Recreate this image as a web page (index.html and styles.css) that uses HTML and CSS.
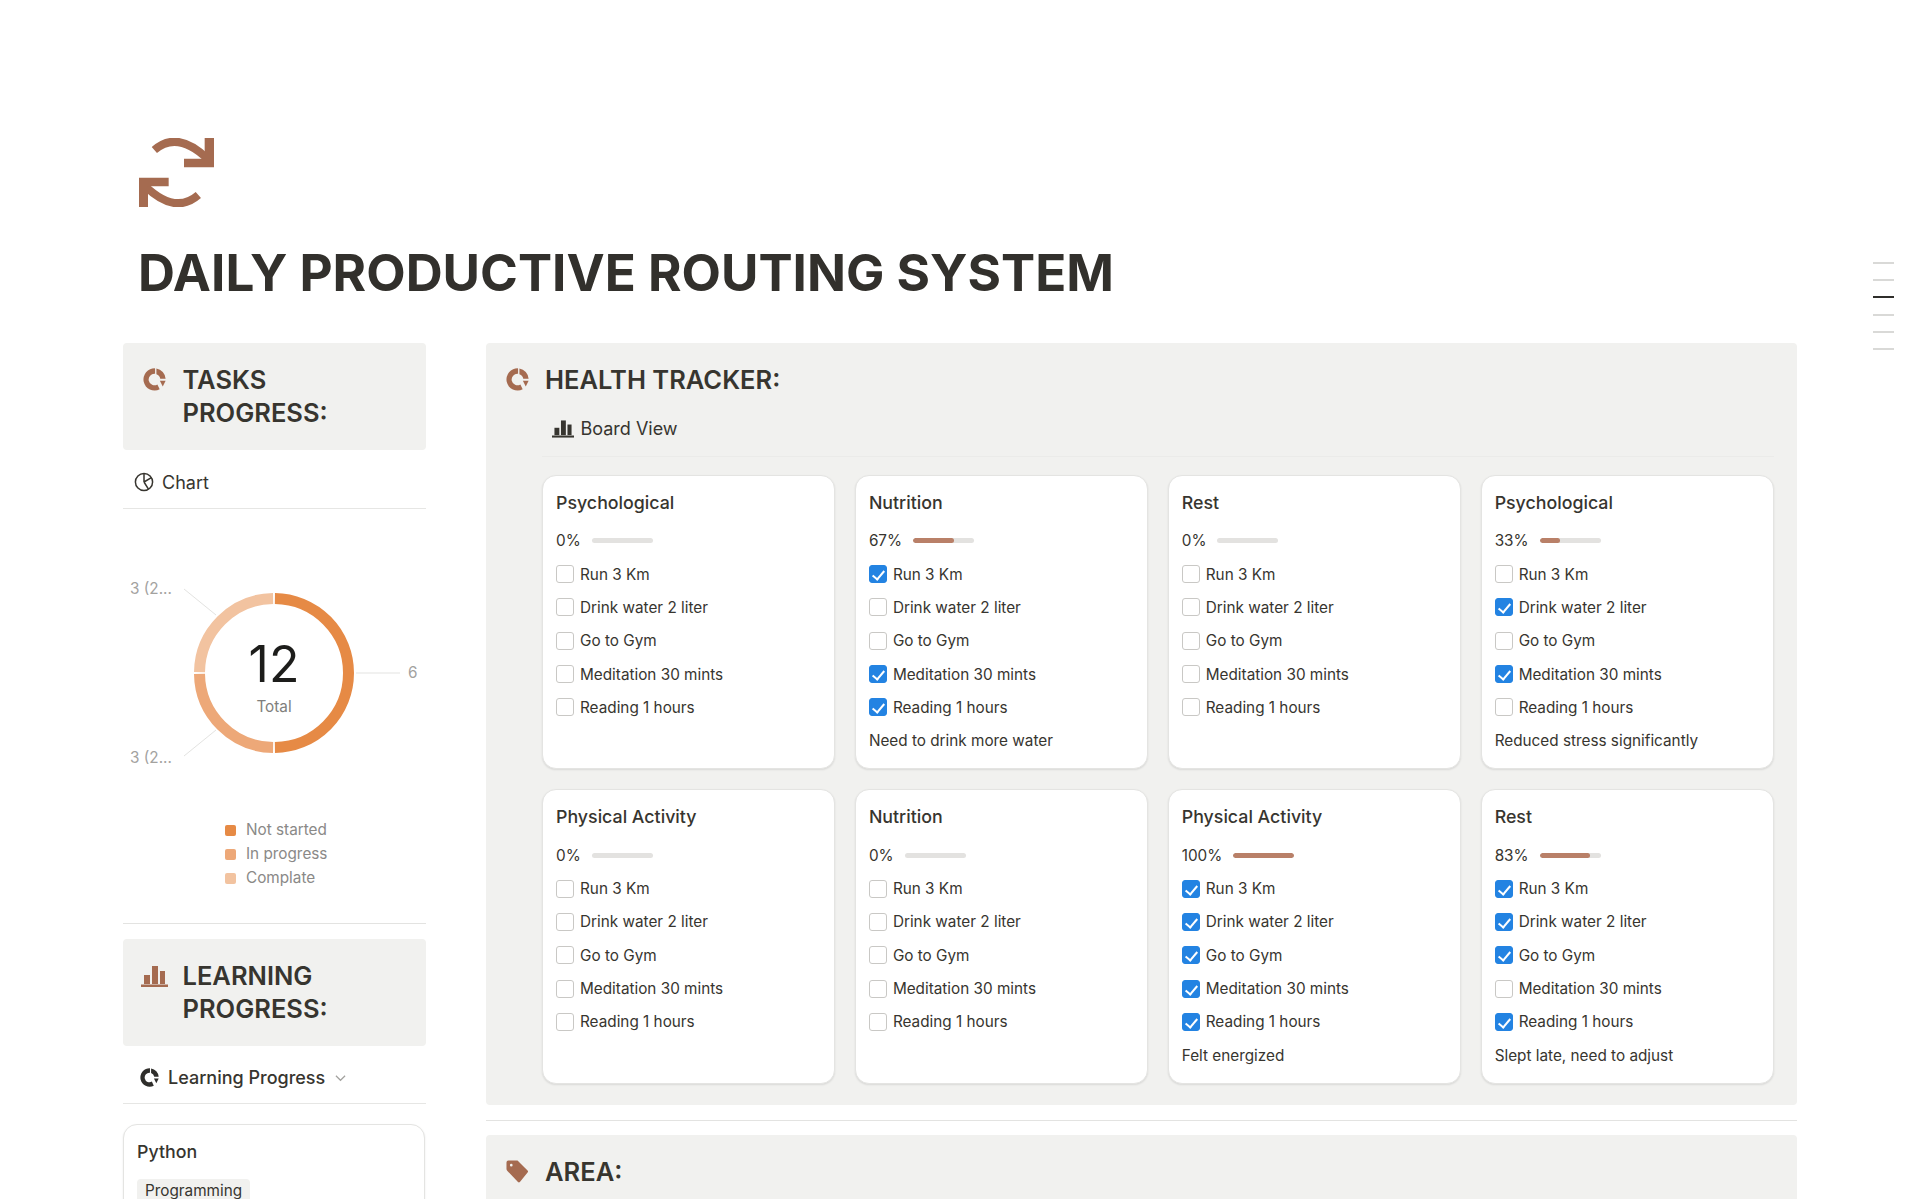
FILE: index.html
```html
<!DOCTYPE html>
<html lang="en">
<head>
    <meta charset="UTF-8">
    <meta name="viewport" content="width=device-width, initial-scale=1.0">
    <title>Daily Productive Routing System</title>
    <link rel="stylesheet" href="styles.css">
</head>
<body>
    <!-- Shared icons -->
    <svg class="sprites" width="0" height="0">
        <symbol id="i-donut" viewBox="0 0 24 24">
            <path d="M12.6 0.4A11.6 11.6 0 1 0 17.4 22.3L15 17.2A6 6 0 1 1 12.6 6.1Z"/>
            <path d="M14 0.6A11.6 11.6 0 0 1 23.6 11.2H18A6 6 0 0 0 14 6.4Z"/>
            <path d="M17.6 13.4H23.6L20.6 19.4Z"/>
        </symbol>
        <symbol id="i-bars" viewBox="0 0 27 21">
            <rect x="3" y="9" width="6" height="9"/>
            <rect x="11" y="0" width="6" height="18"/>
            <rect x="19" y="5" width="5" height="13"/>
            <rect x="0" y="18.5" width="27" height="2.5"/>
        </symbol>
    </svg>

    <div class="page">
        <!-- Page header -->
        <svg class="page-icon" viewBox="0 0 225 207">
            <g id="refresh-half">
                <path d="M46 36Q115 -24 205 62" class="page-icon-arc"/>
                <path d="M197 0H225V88H135V62H197Z"/>
            </g>
            <use href="#refresh-half" transform="rotate(180 112 103.5)"/>
        </svg>
        <h1>DAILY PRODUCTIVE ROUTING SYSTEM</h1>

        <div class="columns">
            <!-- Left column -->
            <aside class="sidebar">
                <div class="callout">
                    <div class="callout-head">
                        <svg class="callout-icon"><use href="#i-donut"/></svg>
                        <h2>TASKS PROGRESS:</h2>
                    </div>
                </div>
                <div class="view-tab">
                    <svg class="tab-chart" viewBox="0 0 20 20">
                        <circle cx="10" cy="10" r="8.6"/>
                        <path d="M10 10V1.4M10 10L17.4 5.6M10 10L14.6 17.3"/>
                    </svg>
                    <span>Chart</span>
                </div>

                <svg class="donut" viewBox="0 0 303 250">
                    <path class="lead" d="M61 41L93 67M61 208L93 182M233 125H277"/>
                    <circle class="seg seg-a" cx="151" cy="125" r="74.5" pathLength="100" stroke-dasharray="49.6 50.4" stroke-dashoffset="-0.2"/>
                    <circle class="seg seg-b" cx="151" cy="125" r="74.5" pathLength="100" stroke-dasharray="24.6 75.4" stroke-dashoffset="-50.2"/>
                    <circle class="seg seg-c" cx="151" cy="125" r="74.5" pathLength="100" stroke-dasharray="24.6 75.4" stroke-dashoffset="-75.2"/>
                    <text class="lbl" x="7" y="46">3 (2...</text>
                    <text class="lbl" x="7" y="215">3 (2...</text>
                    <text class="lbl" x="285" y="130">6</text>
                    <text class="num" x="151" y="134" text-anchor="middle">12</text>
                    <text class="tot" x="151" y="164" text-anchor="middle">Total</text>
                </svg>

                <ul class="legend">
                    <li><i class="seg-a-bg"></i>Not started</li>
                    <li><i class="seg-b-bg"></i>In progress</li>
                    <li><i class="seg-c-bg"></i>Complate</li>
                </ul>

                <hr class="rule side-rule">

                <div class="callout">
                    <div class="callout-head">
                        <svg class="callout-icon icon-bars"><use href="#i-bars"/></svg>
                        <h2>LEARNING PROGRESS:</h2>
                    </div>
                </div>
                <div class="view-tab tab-learning">
                    <svg class="tab-donut"><use href="#i-donut"/></svg>
                    <span>Learning Progress</span>
                    <svg class="chevron" viewBox="0 0 12 8"><path d="M1 1.5L6 6.5L11 1.5"/></svg>
                </div>

                <div class="card card-python">
                    <div class="card-title">Python</div>
                    <span class="tag">Programming</span>
                </div>
            </aside>

            <!-- Right column -->
            <main class="main">
                <section class="callout">
                    <div class="callout-head">
                        <svg class="callout-icon"><use href="#i-donut"/></svg>
                        <h2>HEALTH TRACKER:</h2>
                    </div>
                    <div class="board-wrap">
                        <div class="board-tab">
                            <svg class="tab-bars"><use href="#i-bars"/></svg>
                            <span>Board View</span>
                        </div>
                        <div class="board">
                            <div class="card">
                                <div class="card-title">Psychological</div>
                                <div class="progress"><span class="pct">0%</span><span class="bar"></span></div>
                                <div class="check"><span class="box"></span>Run 3 Km</div>
                                <div class="check"><span class="box"></span>Drink water 2 liter</div>
                                <div class="check"><span class="box"></span>Go to Gym</div>
                                <div class="check"><span class="box"></span>Meditation 30 mints</div>
                                <div class="check"><span class="box"></span>Reading 1 hours</div>
                            </div>
                            <div class="card">
                                <div class="card-title">Nutrition</div>
                                <div class="progress"><span class="pct">67%</span><span class="bar"><b style="width: 67%"></b></span></div>
                                <div class="check"><span class="box on"></span>Run 3 Km</div>
                                <div class="check"><span class="box"></span>Drink water 2 liter</div>
                                <div class="check"><span class="box"></span>Go to Gym</div>
                                <div class="check"><span class="box on"></span>Meditation 30 mints</div>
                                <div class="check"><span class="box on"></span>Reading 1 hours</div>
                                <div class="note">Need to drink more water</div>
                            </div>
                            <div class="card">
                                <div class="card-title">Rest</div>
                                <div class="progress"><span class="pct">0%</span><span class="bar"></span></div>
                                <div class="check"><span class="box"></span>Run 3 Km</div>
                                <div class="check"><span class="box"></span>Drink water 2 liter</div>
                                <div class="check"><span class="box"></span>Go to Gym</div>
                                <div class="check"><span class="box"></span>Meditation 30 mints</div>
                                <div class="check"><span class="box"></span>Reading 1 hours</div>
                            </div>
                            <div class="card">
                                <div class="card-title">Psychological</div>
                                <div class="progress"><span class="pct">33%</span><span class="bar"><b style="width: 33%"></b></span></div>
                                <div class="check"><span class="box"></span>Run 3 Km</div>
                                <div class="check"><span class="box on"></span>Drink water 2 liter</div>
                                <div class="check"><span class="box"></span>Go to Gym</div>
                                <div class="check"><span class="box on"></span>Meditation 30 mints</div>
                                <div class="check"><span class="box"></span>Reading 1 hours</div>
                                <div class="note">Reduced stress significantly</div>
                            </div>
                            <div class="card">
                                <div class="card-title">Physical Activity</div>
                                <div class="progress"><span class="pct">0%</span><span class="bar"></span></div>
                                <div class="check"><span class="box"></span>Run 3 Km</div>
                                <div class="check"><span class="box"></span>Drink water 2 liter</div>
                                <div class="check"><span class="box"></span>Go to Gym</div>
                                <div class="check"><span class="box"></span>Meditation 30 mints</div>
                                <div class="check"><span class="box"></span>Reading 1 hours</div>
                            </div>
                            <div class="card">
                                <div class="card-title">Nutrition</div>
                                <div class="progress"><span class="pct">0%</span><span class="bar"></span></div>
                                <div class="check"><span class="box"></span>Run 3 Km</div>
                                <div class="check"><span class="box"></span>Drink water 2 liter</div>
                                <div class="check"><span class="box"></span>Go to Gym</div>
                                <div class="check"><span class="box"></span>Meditation 30 mints</div>
                                <div class="check"><span class="box"></span>Reading 1 hours</div>
                            </div>
                            <div class="card">
                                <div class="card-title">Physical Activity</div>
                                <div class="progress"><span class="pct">100%</span><span class="bar"><b style="width: 100%"></b></span></div>
                                <div class="check"><span class="box on"></span>Run 3 Km</div>
                                <div class="check"><span class="box on"></span>Drink water 2 liter</div>
                                <div class="check"><span class="box on"></span>Go to Gym</div>
                                <div class="check"><span class="box on"></span>Meditation 30 mints</div>
                                <div class="check"><span class="box on"></span>Reading 1 hours</div>
                                <div class="note">Felt energized</div>
                            </div>
                            <div class="card">
                                <div class="card-title">Rest</div>
                                <div class="progress"><span class="pct">83%</span><span class="bar"><b style="width: 83%"></b></span></div>
                                <div class="check"><span class="box on"></span>Run 3 Km</div>
                                <div class="check"><span class="box on"></span>Drink water 2 liter</div>
                                <div class="check"><span class="box on"></span>Go to Gym</div>
                                <div class="check"><span class="box"></span>Meditation 30 mints</div>
                                <div class="check"><span class="box on"></span>Reading 1 hours</div>
                                <div class="note">Slept late, need to adjust</div>
                            </div>
                        </div>
                    </div>
                </section>

                <hr class="rule main-rule">

                <section class="callout">
                    <div class="callout-head">
                        <svg class="callout-icon icon-tag" viewBox="0 0 23 24">
                            <path fill-rule="evenodd" d="M0 2.5Q0 0.5 2 0.5H11.5L22 11Q23 12 22 13L14 23Q13 24 12 23L1 11.5Q0 10.5 0 9.5ZM5 4A1.4 1.4 0 1 0 5 6.8A1.4 1.4 0 1 0 5 4Z"/>
                        </svg>
                        <h2>AREA:</h2>
                    </div>
                    <div class="area-space"></div>
                </section>
            </main>
        </div>

        <!-- Outline dashes on the right edge -->
        <nav class="outline">
            <span></span><span></span><span class="active"></span><span></span><span></span><span></span>
        </nav>
    </div>
</body>
</html>
```

FILE: styles.css
```css
* {
    box-sizing: border-box;
}

html, body {
    margin: 0;
    height: 1199px;
    overflow: hidden;
    background-color: white;
}

body {
    font-family: Inter, "Noto Sans", sans-serif;
    color: #37352f;
}

.sprites {
    position: absolute;
}

.page {
    position: relative;
    height: 1199px;
    overflow: hidden;
    padding: 138px 123px 0;
}

.page-icon {
    display: block;
    width: 75px;
    height: 69px;
    margin-left: 16px;
    fill: #a56b50;
}

.page-icon-arc {
    fill: none;
    stroke: #a56b50;
    stroke-width: 24;
}

h1 {
    margin: 35px 0 41px 15px;
    font-size: 51.2px;
    line-height: 60px;
    font-weight: 700;
    color: #32302c;
}

h2 {
    margin: 0;
    font-size: 25.5px;
    line-height: 33px;
    font-weight: 600;
    color: #37352f;
}

.columns {
    display: flex;
    gap: 59.5px;
    align-items: flex-start;
}

.sidebar {
    width: 303px;
    flex: none;
}

.main {
    flex: 1;
    min-width: 0;
}

.callout {
    background-color: #f1f1ef;
    border-radius: 4px;
    padding: 20px 23.5px 21px 20px;
}

.callout-head {
    display: flex;
    gap: 16.5px;
}

.callout-icon {
    width: 23px;
    height: 23px;
    margin-top: 5px;
    flex: none;
    fill: #a56b50;
}

.icon-bars {
    width: 27px;
    height: 21px;
    margin: 7px -2px 0 -2px;
}

.view-tab {
    display: flex;
    align-items: center;
    gap: 8px;
    height: 59px;
    padding: 6px 0 0 11px;
    border-bottom: 1px solid #e6e6e4;
    font-size: 18px;
}

.tab-chart {
    width: 20px;
    height: 20px;
    fill: none;
    stroke: #37352f;
    stroke-width: 1.5;
}

.donut {
    display: block;
    width: 303px;
    height: 250px;
    margin-top: 39px;
}

.lead {
    fill: none;
    stroke: #e3e3e1;
    stroke-width: 1;
}

.seg {
    fill: none;
    stroke-width: 11;
    transform: rotate(-90deg);
    transform-origin: 151px 125px;
}

.seg-a { stroke: #e68a45; }
.seg-b { stroke: #eda878; }
.seg-c { stroke: #f2c3a0; }
.seg-a-bg { background-color: #e68a45; }
.seg-b-bg { background-color: #eda878; }
.seg-c-bg { background-color: #f2c3a0; }

.lbl {
    font-size: 15.3px;
    fill: #a3a29f;
}

.num {
    font-size: 50px;
    fill: #1d1d1b;
}

.tot {
    font-size: 15.3px;
    fill: #807f7c;
}

.legend {
    list-style: none;
    margin: 20px 0 0;
    padding: 0 0 0 102px;
    font-size: 15.3px;
    line-height: 24px;
    color: #8a8987;
}

.legend li {
    display: flex;
    align-items: center;
    gap: 10px;
}

.legend i {
    width: 11px;
    height: 11px;
    border-radius: 2px;
}

.rule {
    margin: 0;
    border: none;
    border-top: 1px solid #e3e3e1;
}

.side-rule {
    margin: 33px 0 15px;
}

.main-rule {
    margin: 15px 0 14px;
}

.tab-learning {
    height: 58px;
    padding-left: 17px;
    font-weight: 500;
    gap: 9px;
}

.tab-donut {
    width: 19px;
    height: 19px;
    fill: #2f2e2b;
}

.chevron {
    width: 11px;
    height: 8px;
    margin-left: 1px;
    fill: none;
    stroke: #a3a29f;
    stroke-width: 1.3;
}

.card {
    background-color: white;
    border: 1px solid #e4e4e2;
    border-radius: 14px;
    padding: 15px 13px 11px;
    box-shadow: 0 1px 2px rgba(0,0,0,0.1);
}

.card-python {
    width: 302px;
    height: 200px;
    margin-top: 20px;
}

.card-python .card-title {
    margin-bottom: 15px;
}

.tag {
    display: inline-block;
    padding: 0 8px;
    background-color: #f1f1ef;
    border-radius: 4px;
    font-size: 15.3px;
    line-height: 24px;
}

.card-title {
    font-size: 17.8px;
    line-height: 24px;
    font-weight: 500;
}

.progress {
    display: flex;
    align-items: center;
    gap: 11px;
    height: 24px;
    margin-top: 14px;
    margin-bottom: 5px;
    font-size: 15.3px;
}

.bar {
    display: block;
    width: 61px;
    height: 5px;
    background-color: #e3e2e0;
    border-radius: 3px;
    overflow: hidden;
}

.bar b {
    display: block;
    height: 100%;
    background-color: #b98068;
    border-radius: 3px;
}

.check, .note {
    display: flex;
    align-items: center;
    gap: 6px;
    height: 33.3px;
    font-size: 15.3px;
}

.box {
    position: relative;
    width: 18px;
    height: 18px;
    flex: none;
    border: 1px solid #c9c8c5;
    border-radius: 3px;
    background-color: white;
}

.box.on {
    background-color: #2383e2;
    border-color: #2383e2;
}

.box.on::after {
    content: "";
    position: absolute;
    left: 5px;
    top: 2px;
    width: 5px;
    height: 10px;
    border: solid white;
    border-width: 0 2px 2px 0;
    transform: rotate(40deg);
}

.board-wrap {
    margin-left: 36.5px;
}

.board-tab {
    display: flex;
    align-items: center;
    gap: 6.5px;
    padding: 20.5px 0 15px 10px;
    border-bottom: 1px solid #ebebe9;
    font-size: 18px;
    line-height: 24px;
}

.tab-bars {
    width: 22px;
    height: 18px;
    fill: #37352f;
}

.board {
    display: grid;
    grid-template-columns: repeat(4, 1fr);
    grid-template-rows: 294.5px 294.5px;
    gap: 20px;
    margin-top: 18px;
}

.area-space {
    height: 80px;
}

.outline {
    position: absolute;
    left: 1873px;
    top: 262px;
    display: flex;
    flex-direction: column;
    gap: 15.2px;
}

.outline span {
    display: block;
    width: 21px;
    height: 2px;
    background-color: #d9d9d7;
}

.outline .active {
    background-color: #2f2e2b;
}
```
